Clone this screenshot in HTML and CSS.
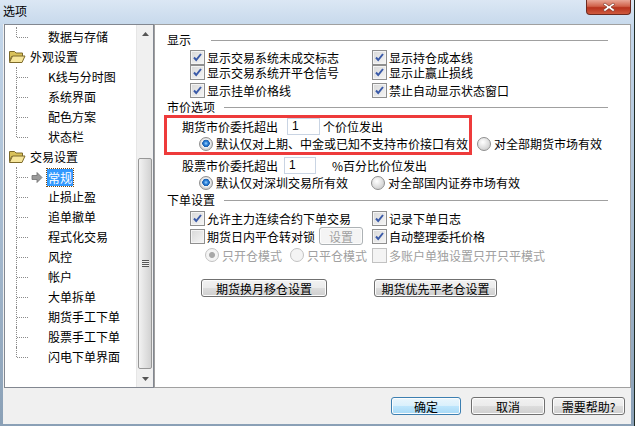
FILE: index.html
```html
<!DOCTYPE html>
<html lang="zh-CN">
<head>
    <meta charset="UTF-8">
    <title>选项</title>
    <link rel="stylesheet" href="styles.css">
</head>
<body>
<div class="window">
    <!-- Title bar -->
    <div class="titlebar">
        <span class="title">选项</span>
        <div class="close-btn">
            <svg width="14" height="10" viewBox="0 0 14 10"><path d="M3 1l4 3 4-3 2 1.5L9 5l4 3-2 1.5-4-3-4 3L1 8l4-3-4-2.5z" fill="#fff" stroke="#6b2418" stroke-width="0.6"/></svg>
        </div>
    </div>

    <div class="client">
        <div class="main">
            <!-- Tree -->
            <div class="tree">
                <ul class="tree-list">
                    <li class="leaf last">数据与存储</li>
                    <li class="folder">
                        <svg class="folder-icon" width="18" height="14" viewBox="0 0 18 14"><path d="M1.5 1.5h5l1.5 1.5h6.5v3.5h-11l-2 5z" fill="#d9c15a" stroke="#7d6a2a"/><path d="M1.5 12.5l3-6.5h12.5l-3 6.5z" fill="#f6e59a" stroke="#7d6a2a"/></svg>
                        外观设置
                    </li>
                    <li class="leaf">K线与分时图</li>
                    <li class="leaf">系统界面</li>
                    <li class="leaf">配色方案</li>
                    <li class="leaf last">状态栏</li>
                    <li class="folder">
                        <svg class="folder-icon" width="18" height="14" viewBox="0 0 18 14"><path d="M1.5 1.5h5l1.5 1.5h6.5v3.5h-11l-2 5z" fill="#d9c15a" stroke="#7d6a2a"/><path d="M1.5 12.5l3-6.5h12.5l-3 6.5z" fill="#f6e59a" stroke="#7d6a2a"/></svg>
                        交易设置
                    </li>
                    <li class="leaf current">
                        <svg class="arrow-icon" width="12" height="11" viewBox="0 0 12 11"><path d="M1 3.5h5V0.5l5 5-5 5V7.5H1z" fill="#9a9a9a" stroke="#6e6e6e" stroke-width="0.8"/></svg>
                        <span class="selected">常规</span>
                    </li>
                    <li class="leaf">止损止盈</li>
                    <li class="leaf">追单撤单</li>
                    <li class="leaf">程式化交易</li>
                    <li class="leaf">风控</li>
                    <li class="leaf">帐户</li>
                    <li class="leaf">大单拆单</li>
                    <li class="leaf">期货手工下单</li>
                    <li class="leaf">股票手工下单</li>
                    <li class="leaf last">闪电下单界面</li>
                </ul>
                <div class="scrollbar">
                    <div class="sb-btn"><svg width="7" height="4" viewBox="0 0 7 4"><path d="M0 4L3.5 0 7 4z" fill="#555"/></svg></div>
                    <div class="sb-track">
                        <div class="sb-thumb"><span class="grip"></span></div>
                    </div>
                    <div class="sb-btn"><svg width="7" height="4" viewBox="0 0 7 4"><path d="M0 0h7L3.5 4z" fill="#555"/></svg></div>
                </div>
            </div>

            <!-- Settings panel -->
            <div class="panel">
                <div class="heading heading-wide">显示</div>
                <div class="check-grid top-checks">
                    <label class="check on">显示交易系统未成交标志</label>
                    <label class="check on">显示持仓成本线</label>
                    <label class="check on">显示交易系统开平仓信号</label>
                    <label class="check on">显示止赢止损线</label>
                    <label class="check on">显示挂单价格线</label>
                    <label class="check on">禁止自动显示状态窗口</label>
                </div>

                <div class="heading">市价选项</div>
                <div class="price-row futures">
                    <span class="price-label">期货市价委托超出</span>
                    <span class="num-input">1</span>
                    <span class="unit">个价位发出</span>
                </div>
                <div class="radio-row">
                    <label class="radio on wide-a">默认仅对上期、中金或已知不支持市价接口有效</label>
                    <label class="radio">对全部期货市场有效</label>
                </div>
                <div class="price-row stocks">
                    <span class="price-label">股票市价委托超出</span>
                    <span class="num-input">1</span>
                    <span class="unit">%百分比价位发出</span>
                </div>
                <div class="radio-row">
                    <label class="radio on wide-b">默认仅对深圳交易所有效</label>
                    <label class="radio">对全部国内证券市场有效</label>
                </div>

                <div class="heading">下单设置</div>
                <div class="check-grid order-checks">
                    <label class="check on">允许主力连续合约下单交易</label>
                    <label class="check on">记录下单日志</label>
                    <div class="check-with-btn">
                        <label class="check">期货日内平仓转对锁</label>
                        <span class="btn small">设置</span>
                    </div>
                    <label class="check on">自动整理委托价格</label>
                    <div class="mode-row">
                        <label class="radio on disabled">只开仓模式</label>
                        <label class="radio disabled">只平仓模式</label>
                    </div>
                    <label class="check disabled">多账户单独设置只开只平模式</label>
                </div>
                <div class="action-row">
                    <span class="btn action-a">期货换月移仓设置</span>
                    <span class="btn action-b">期货优先平老仓设置</span>
                </div>

                <!-- annotation -->
                <div class="highlight-box"></div>
            </div>
        </div>

        <div class="footer">
            <span class="btn default ok">确定</span>
            <span class="btn cancel">取消</span>
            <span class="btn help">需要帮助?</span>
        </div>
    </div>
</div>
</body>
</html>
```

FILE: styles.css
```css
* {
    box-sizing: border-box;
}

body {
    margin: 0;
    width: 635px;
    height: 426px;
    overflow: hidden;
    font-family: "Noto Sans CJK SC", "Liberation Sans", sans-serif;
    font-size: 12px;
    color: #000;
    background: #1d2a24;
}

.window {
    width: 635px;
    height: 426px;
    display: flex;
    flex-direction: column;
    padding: 0 3px 2px 3px;
    background: linear-gradient(#dbe7f4, #c3d6ea 30px, #8aa0b6);
    border-right: 1px solid #1d2a24;
}

.titlebar {
    height: 24px;
    display: flex;
    align-items: flex-start;
}

.title {
    padding-top: 3px;
    font-size: 12px;
    line-height: 16px;
}

.close-btn {
    margin-left: auto;
    width: 45px;
    height: 15px;
    display: flex;
    align-items: center;
    justify-content: center;
    border: 1px solid #6d2a1f;
    border-top: none;
    border-radius: 0 0 4px 4px;
    background: linear-gradient(#e9a797, #d0624a 45%, #b7321c 55%, #cf5a3e);
}

.client {
    flex: 1;
    display: flex;
    flex-direction: column;
    background: #f0f0f0;
}

.main {
    height: 364px;
    display: flex;
}

/* Tree */
.tree {
    width: 150px;
    margin-left: 1px;
    height: 364px;
    display: flex;
    border: 1px solid #828790;
    background: #fff;
}

.tree-list {
    list-style: none;
    margin: 0;
    padding: 2px 0 0 0;
    flex: 1;
}

.tree-list li {
    height: 20px;
    display: flex;
    align-items: center;
    position: relative;
    white-space: nowrap;
    line-height: 16px;
}

.tree-list .folder {
    padding-left: 3px;
}

.folder-icon {
    margin-right: 4px;
}

.tree-list .leaf {
    padding-left: 43px;
}

.tree-list .leaf::before {
    content: "";
    position: absolute;
    left: 11px;
    top: 0;
    bottom: 0;
    border-left: 1px dotted #8a8a8a;
}

.tree-list .leaf.last::before {
    bottom: 50%;
}

.tree-list .leaf::after {
    content: "";
    position: absolute;
    left: 12px;
    top: 50%;
    width: 11px;
    border-top: 1px dotted #8a8a8a;
}

.tree-list .current {
    padding-left: 26px;
}

.arrow-icon {
    margin-right: 4px;
}

.selected {
    background: #3399ff;
    color: #fff;
    padding: 0 1px;
    height: 17px;
    line-height: 17px;
    outline: 1px dotted #7a4a10;
}

.scrollbar {
    width: 17px;
    display: flex;
    flex-direction: column;
    background: #f0f0f0;
    border-left: 1px solid #e6e6e6;
}

.sb-btn {
    height: 17px;
    display: flex;
    align-items: center;
    justify-content: center;
}

.sb-track {
    flex: 1;
    display: flex;
    flex-direction: column;
    justify-content: flex-end;
    padding-bottom: 1px;
}

.sb-thumb {
    height: 211px;
    margin: 0 1px;
    border: 1px solid #979797;
    border-radius: 2px;
    background: linear-gradient(90deg, #f2f2f2, #e2e2e2 50%, #d2d2d2);
    display: flex;
    align-items: center;
    justify-content: center;
}

.grip {
    width: 7px;
    height: 7px;
    background: repeating-linear-gradient(#555 0 1px, #eee 1px 2px);
}

/* Panel */
.panel {
    position: relative;
    flex: 1;
    background: #fff;
    border: 1px solid #a0a0a0;
    padding: 6px 22px 0 12px;
}

.heading {
    height: 14px;
    display: flex;
    align-items: center;
    line-height: 14px;
}

.heading::after {
    content: "";
    flex: 1;
    margin-left: 9px;
    border-top: 1px solid #a0a0a0;
}

.heading-wide {
    height: 18px;
}

.heading-wide::after {
    margin-left: 20px;
}

.check-grid {
    display: grid;
    grid-template-columns: 182px 1fr;
    padding-left: 23px;
}

.top-checks {
    margin-top: 1px;
    grid-template-rows: 15px 15px 20px;
}

.check, .radio {
    display: flex;
    align-items: center;
    white-space: nowrap;
    line-height: 13px;
}

.check::before {
    content: "";
    width: 13px;
    height: 13px;
    margin-right: 2px;
    border: 1px solid #8f8f8f;
    background: linear-gradient(135deg, #d8d8d8, #f6f6f6);
    box-shadow: inset 0 0 0 1px #f4f4f4;
    flex: none;
}

.check.on::before {
    background:
        url("data:image/svg+xml;utf8,<svg xmlns='http://www.w3.org/2000/svg' width='11' height='11'><path d='M2 5.5l2.2 2.5L9 2' fill='none' stroke='%233a5aa8' stroke-width='2'/></svg>") center / 11px 11px no-repeat,
        linear-gradient(135deg, #d8d8d8, #f6f6f6);
}

.radio::before {
    content: "";
    width: 12px;
    height: 12px;
    margin-right: 3px;
    border-radius: 50%;
    border: 1px solid #8f8f8f;
    background: radial-gradient(circle at 40% 35%, #ffffff, #d4d4d4 70%);
    flex: none;
}

.radio.on::before {
    background: radial-gradient(circle at 50% 45%, #9fd6ff 0, #2a7fd8 2px, #1a5fae 3.5px, #f4f4f4 4px, #d0d0d0 6px);
}

.check.disabled, .radio.disabled {
    color: #a0a0a0;
}

.check.disabled::before, .radio.disabled::before {
    border-color: #c2c2c2;
    background: #f4f4f4;
}

.radio.on.disabled::before {
    background: radial-gradient(circle, #a8a8a8 0, #a8a8a8 2.5px, #f4f4f4 3.5px);
}

.price-row {
    display: flex;
    align-items: center;
    padding-left: 15px;
}

.price-row.futures {
    margin-top: 4px;
    height: 17px;
}

.price-row.stocks {
    margin-top: 5px;
    height: 17px;
}

.num-input {
    height: 17px;
    width: 33px;
    border: 1px solid #c9d4e3;
    padding: 0 4px;
    line-height: 15px;
    font-family: "Liberation Sans", sans-serif;
}

.futures .num-input {
    margin-left: 9px;
}

.futures .unit {
    margin-left: 3px;
}

.stocks .num-input {
    margin-left: 6px;
    width: 32px;
}

.stocks .unit {
    margin-left: 16px;
}

.radio-row {
    display: flex;
    align-items: center;
    height: 17px;
    padding-left: 32px;
}

.radio-row + .heading {
    margin-top: 2px;
}

.wide-a {
    width: 278px;
}

.wide-b {
    width: 172px;
}

.order-checks {
    margin-top: 4px;
    grid-template-rows: 15px 20px 18px;
}

.check-with-btn {
    display: flex;
    align-items: center;
}

.mode-row {
    display: flex;
    align-items: center;
    padding-left: 15px;
    gap: 8px;
}

.btn {
    display: inline-flex;
    align-items: center;
    justify-content: center;
    height: 18px;
    border: 1px solid #707070;
    border-radius: 3px;
    background: linear-gradient(#f2f2f2, #ebebeb 50%, #dddddd 50%, #cfcfcf);
    box-shadow: inset 0 0 0 1px #fcfcfc;
    white-space: nowrap;
}

.btn.small {
    width: 44px;
    margin-left: 4px;
    color: #a0a0a0;
    border-color: #adb2b5;
    background: #f4f4f4;
}

.action-row {
    display: flex;
    margin-top: 15px;
    padding-left: 34px;
}

.action-a {
    width: 126px;
}

.action-b {
    width: 123px;
    margin-left: 47px;
}

.highlight-box {
    position: absolute;
    left: 9px;
    top: 90px;
    width: 308px;
    height: 40px;
    border: 3px solid #ee3b3b;
}

/* Footer */
.footer {
    flex: 1;
    display: flex;
    justify-content: flex-end;
    align-items: flex-start;
    padding: 9px 6px 0 0;
}

.footer .btn {
    height: 18px;
}

.ok {
    width: 70px;
}

.btn.default {
    border-color: #3c7fb1;
    background: linear-gradient(#eaf6fd, #d9f0fc 50%, #bee6fd 50%, #a7d9f5);
}

.cancel {
    width: 74px;
    margin-left: 10px;
}

.help {
    width: 73px;
    margin-left: 7px;
}
```
